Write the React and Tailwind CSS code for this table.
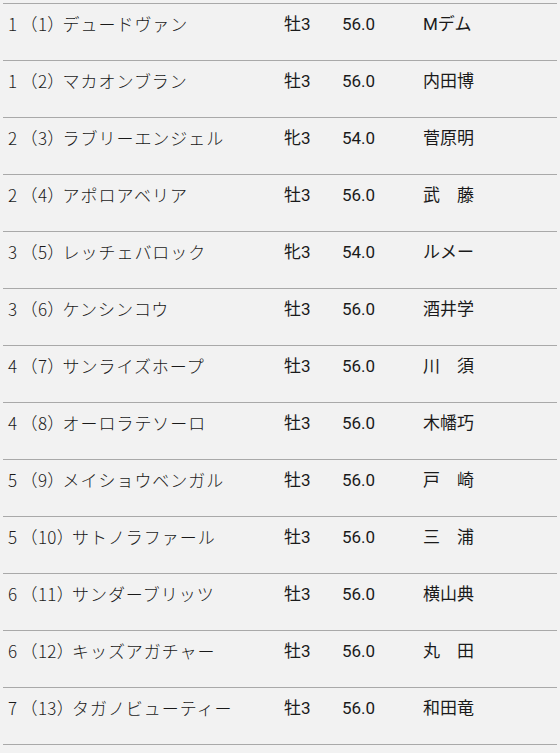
import React from "react";

const rows = [
  ["1", "（1）", "デュードヴァン", "牡3", "56.0", "Mデム"],
  ["1", "（2）", "マカオンブラン", "牡3", "56.0", "内田博"],
  ["2", "（3）", "ラブリーエンジェル", "牝3", "54.0", "菅原明"],
  ["2", "（4）", "アポロアベリア", "牡3", "56.0", "武　藤"],
  ["3", "（5）", "レッチェバロック", "牝3", "54.0", "ルメー"],
  ["3", "（6）", "ケンシンコウ", "牡3", "56.0", "酒井学"],
  ["4", "（7）", "サンライズホープ", "牡3", "56.0", "川　須"],
  ["4", "（8）", "オーロラテソーロ", "牡3", "56.0", "木幡巧"],
  ["5", "（9）", "メイショウベンガル", "牡3", "56.0", "戸　崎"],
  ["5", "（10）", "サトノラファール", "牡3", "56.0", "三　浦"],
  ["6", "（11）", "サンダーブリッツ", "牡3", "56.0", "横山典"],
  ["6", "（12）", "キッズアガチャー", "牡3", "56.0", "丸　田"],
  ["7", "（13）", "タガノビューティー", "牡3", "56.0", "和田竜"],
];

export default function App() {
  return (
    <div className="min-h-[753px] w-[560px] bg-[#f2f2f2] pt-[3px] px-[3px] text-[#1a1a1a]">
      {rows.map((r, i) => (
        <div
          key={i}
          className={
            "flex h-[57px] items-start border-t border-[#a9a9a9] pl-[5px] pt-[7px] text-[17px] leading-[26px] " +
            (i === rows.length - 1 ? "border-b h-[58px]" : "")
          }
        >
          <div className="w-[276px] whitespace-nowrap font-light [font-family:'Noto_Sans_CJK_JP',sans-serif]">
            <span className="tracking-[0.5px]">{r[0]}</span>
            <span className="ml-[3px] tracking-[0.3px]">{r[1]}</span>
            <span className="ml-[-2px] tracking-[0.95px]">{r[2]}</span>
          </div>
          <div className="w-[58px] [font-family:Roboto,'Noto_Sans_CJK_JP',sans-serif]">{r[3]}</div>
          <div className="w-[81px] [font-family:Roboto,'Noto_Sans_CJK_JP',sans-serif]">{r[4]}</div>
          <div className="[font-family:Roboto,'Noto_Sans_CJK_JP',sans-serif]">{r[5]}</div>
        </div>
      ))}
    </div>
  );
}
